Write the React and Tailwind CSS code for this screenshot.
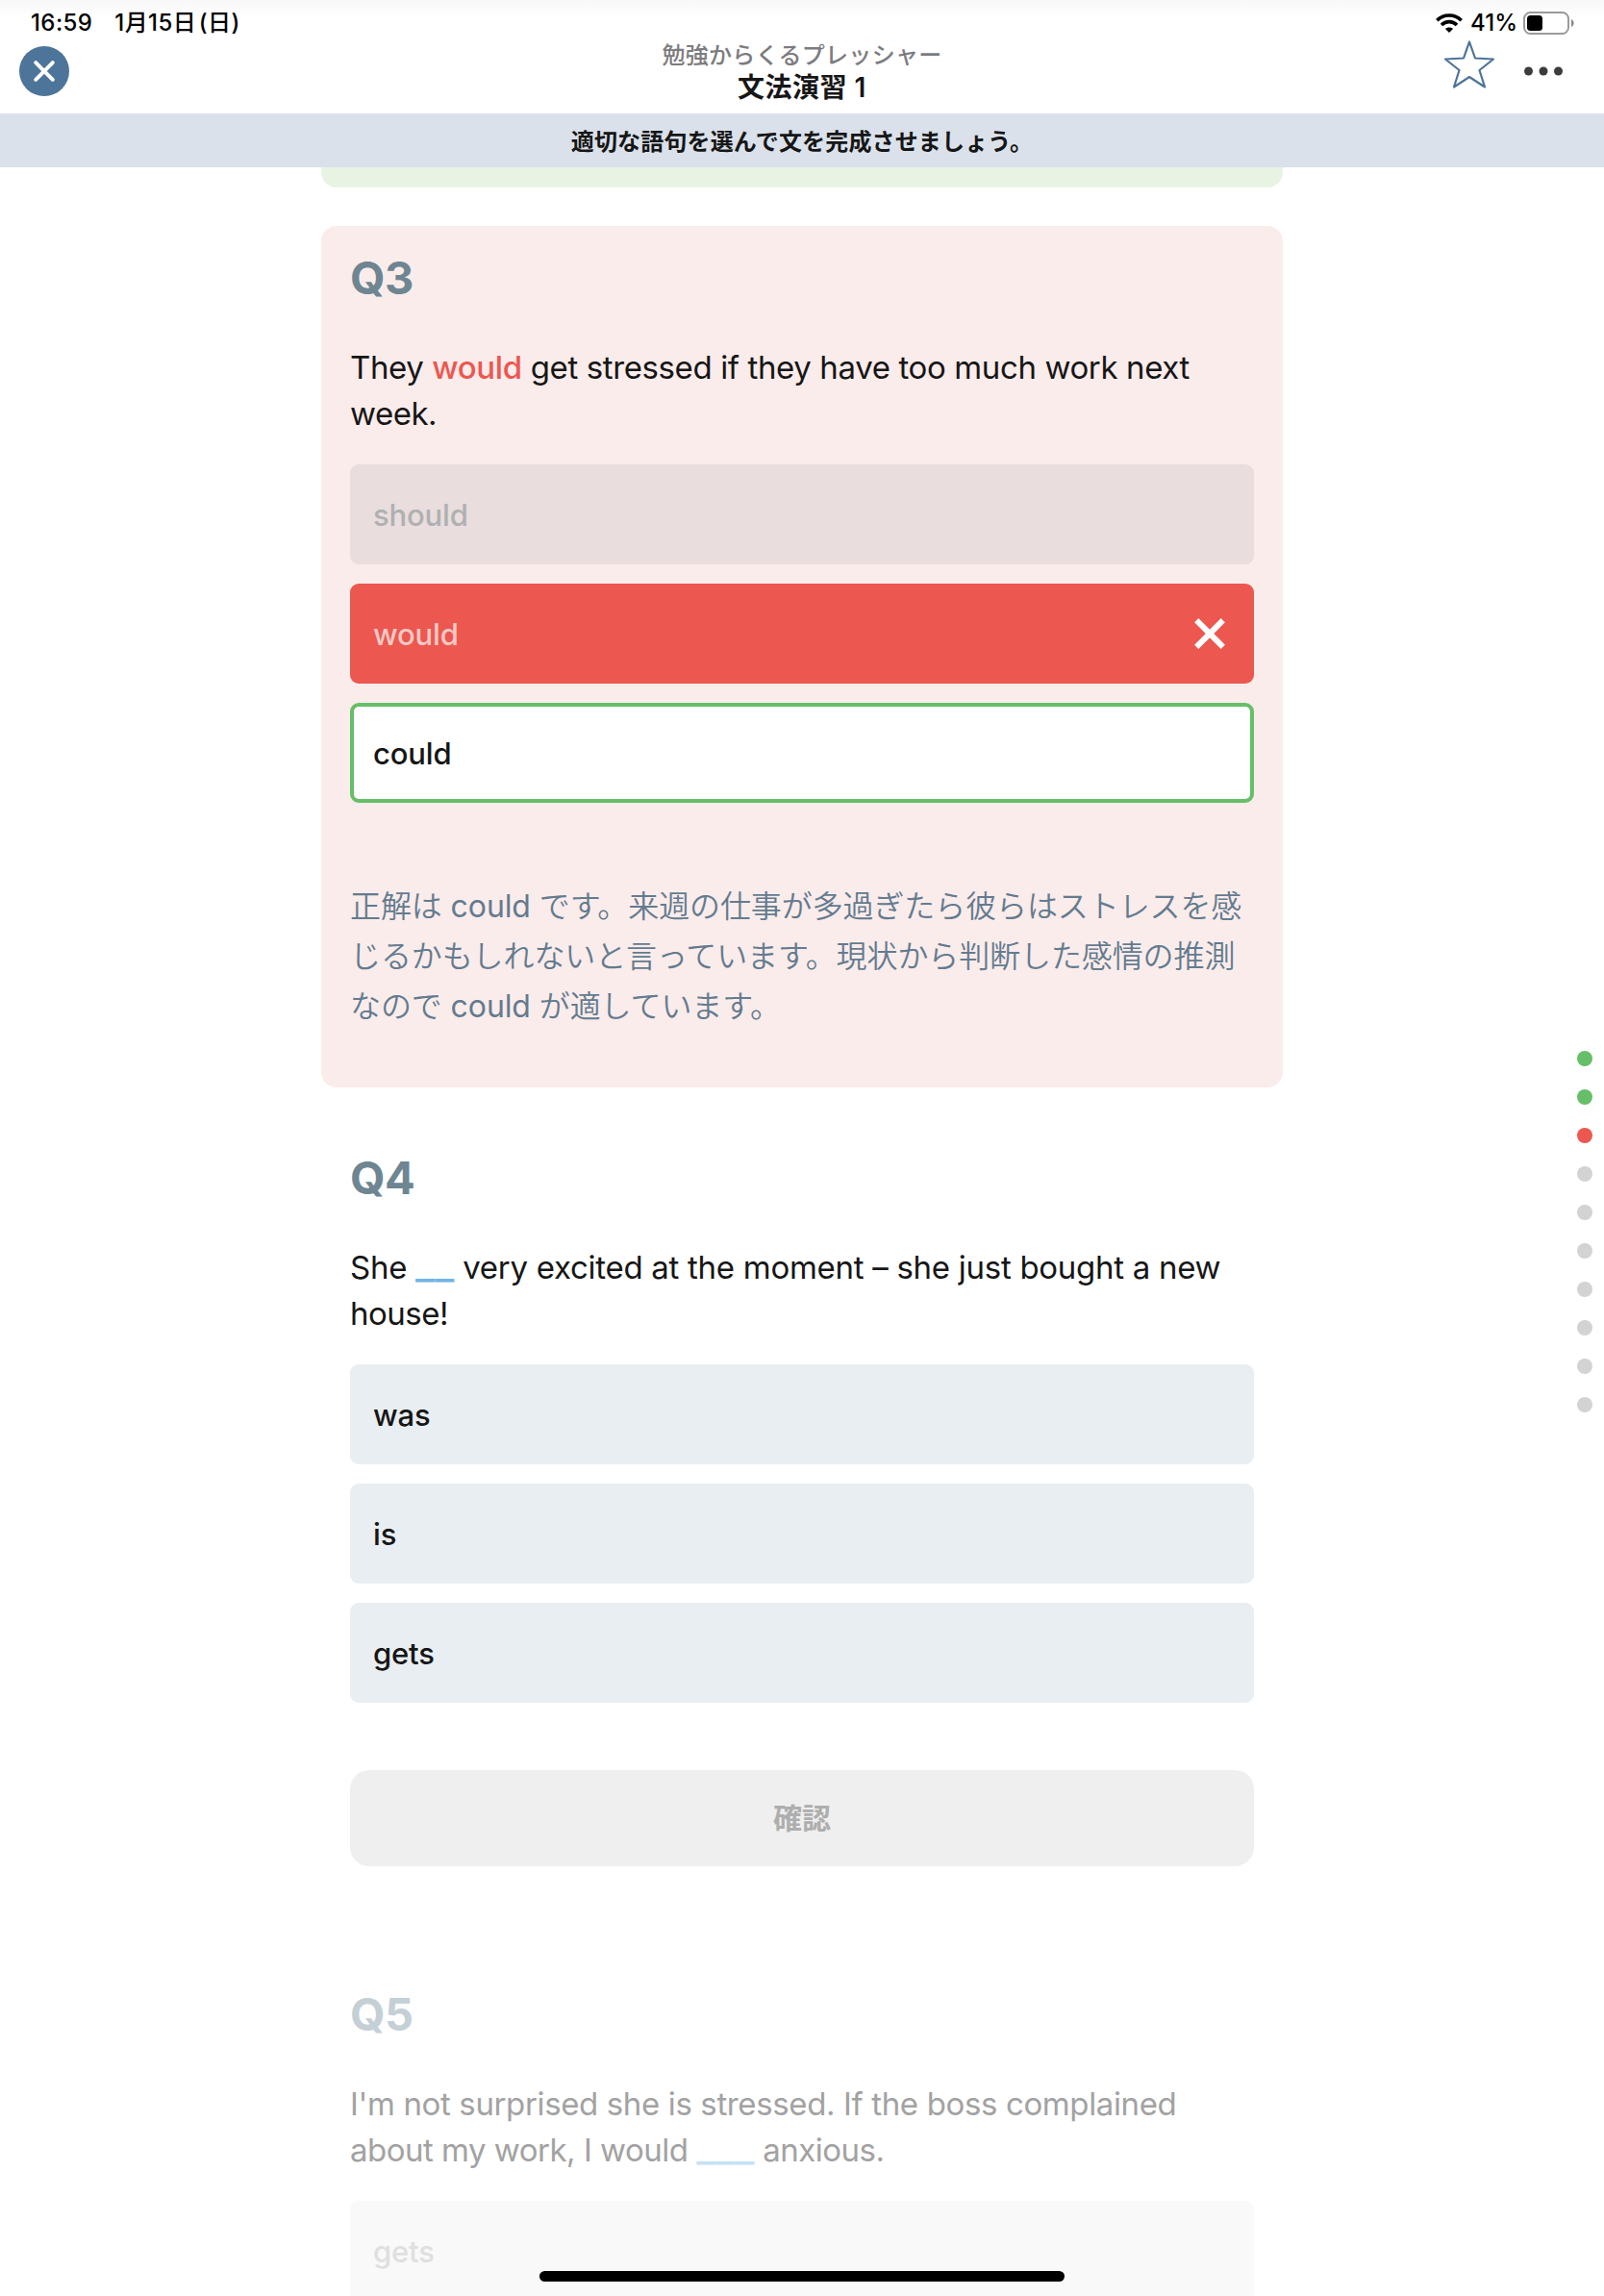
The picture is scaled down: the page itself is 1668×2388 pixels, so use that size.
function Line({ className = "", children }) {
  return <span className={`block whitespace-nowrap ${className}`}>{children}</span>;
}

function Blank({ className, children }) {
  return <span className={`text-[44px] leading-[0] tracking-normal ${className}`}>{children}</span>;
}

function Cross({ size, inset, width, cap }) {
  return (
    <svg width={size} height={size} viewBox={`0 0 ${size} ${size}`} fill="none" stroke="#fff" strokeWidth={width} strokeLinecap={cap}>
      <path d={`M${inset} ${inset}L${size - inset} ${size - inset}M${size - inset} ${inset}L${inset} ${size - inset}`} />
    </svg>
  );
}

function StatusBar() {
  return (
    <div className="flex h-12 items-start justify-between bg-linear-to-b from-[#f8f8f8] to-white to-40% pt-2 pr-[30px] pl-8 text-[24px] leading-8 font-medium text-black">
      <div className="flex gap-[23px]">
        <span className="tracking-[0.4px]">16:59</span>
        <span className="tracking-[0.4px] [word-spacing:-4px]">1月15日 (日)</span>
      </div>
      <div className="flex items-center">
        <svg className="mr-2" width="28" height="20" viewBox="0 0 28 20" fill="none" stroke="#000" strokeWidth="3.6">
          <path d="M1.3 7.2C8 .2 20 .2 26.7 7.2" />
          <path d="M6 12C10.5 7.5 17.5 7.5 22 12" />
          <path d="M14 20l-4-4c2-2 6-2 8 0z" fill="#000" stroke="none" />
        </svg>
        <span>41%</span>
        <svg className="ml-[6px]" width="54" height="24" viewBox="0 0 54 24">
          <rect x="1" y="1" width="46" height="22" rx="6.5" fill="none" stroke="#9a9a9a" strokeWidth="2" />
          <rect x="4" y="4" width="16" height="16" rx="3.5" fill="#000" />
          <path d="M50 8c3.5 1.5 3.5 6.5 0 8z" fill="#8a8a8a" />
        </svg>
      </div>
    </div>
  );
}

function Header() {
  return (
    <header className="shrink-0">
      <StatusBar />
      <div className="-mt-2 flex h-[78px] items-start justify-between pr-[43px] pl-5">
        <button className="mt-2 flex size-[52px] items-center justify-center rounded-full bg-[#4d7499]">
          <Cross size={26} inset={4.2} width={4} cap="round" />
        </button>
        <div className="ml-[94px] flex flex-col items-center pt-[2px]">
          <span className="text-[24px] leading-8 font-medium tracking-[0.3px] text-[#7c7c80]">勉強からくるプレッシャー</span>
          <span className="text-[28px] leading-[34px] font-semibold tracking-[0.5px] text-[#161616]">文法演習 1</span>
        </div>
        <div className="flex">
          <svg className="mt-[2px] mr-[31px]" width="52" height="50" viewBox="0 0 52 50" fill="none" stroke="#4d7499" strokeWidth="2.2" strokeLinejoin="round">
            <path d="M26 1.5L32 18.5L51 19.5L36.5 31L42 48.5L26 38L10 48.5L15.5 31L1 19.5L20 18.5Z" />
          </svg>
          <svg className="mt-[29px]" width="40" height="10" viewBox="0 0 40 10" fill="#3c3c3c">
            <circle cx="4.5" cy="5" r="4.5" />
            <circle cx="20" cy="5" r="4.5" />
            <circle cx="35.5" cy="5" r="4.5" />
          </svg>
        </div>
      </div>
      <div className="flex h-14 items-center justify-center bg-[#dae1ea] pt-[3px] text-[24px] font-semibold tracking-[0.15px] text-[#161616]">
        適切な語句を選んで文を完成させましょう。
      </div>
    </header>
  );
}

const tones = {
  idle: "bg-[#e9eef2] pl-6 text-[#161616]",
  muted: "bg-[#e9dddd] pl-6 text-[#afb0b2]",
  wrong: "bg-[#ec5750] pl-6 text-[#f7c9c5]",
  right: "border-4 border-[#66bf68] bg-white pl-5 text-[#161616]",
  faded: "bg-[#f9f9f9] pl-6 text-[#dfdfdf]",
};

function Option({ tone = "idle", children }) {
  return (
    <li className={`flex h-[104px] shrink-0 items-center justify-between rounded-[9px] pr-[29px] text-[31px] font-medium tracking-[-0.15px] ${tones[tone]}`}>
      <span className="pt-[2px]">{children}</span>
      {tone === "wrong" && <Cross size={34} inset={3.2} width={6} cap="butt" />}
    </li>
  );
}

function Question({ title, titleColor = "text-[#6e8592]", textColor = "text-[#161616]", text, options }) {
  return (
    <>
      <h2 className={`text-[47px] leading-[56px] font-bold tracking-[-0.5px] ${titleColor}`}>{title}</h2>
      <p className={`mt-[41px] text-[33px] leading-[48px] ${textColor}`}>{text}</p>
      <ul className="mt-[29px] flex flex-col gap-5">{options}</ul>
    </>
  );
}

const progress = ["right", "right", "wrong", "open", "open", "open", "open", "open", "open", "open"];
const dotColors = { right: "bg-[#66bf68]", wrong: "bg-[#ec5750]", open: "bg-[#d3d3d3]" };

export default function App() {
  return (
    <div lang="ja" className="relative flex h-[2388px] w-[1668px] flex-col overflow-hidden bg-white font-['Inter','Noto_Sans_CJK_JP',sans-serif]">
      <Header />
      <main className="mx-auto flex w-[1000px] flex-col">
        <div className="h-[21px] shrink-0 rounded-b-[16px] bg-[#e8f3e3]" />
        <section className="mt-10 shrink-0 rounded-[16px] bg-[#faeceb] px-[30px] pt-[26px] pb-[58px]">
          <Question
            title="Q3"
            text={
              <>
                <Line className="tracking-[-0.38px]">
                  They <span className="font-medium text-[#ec5750]">would</span> get stressed if they have too much work next
                </Line>
                <Line className="tracking-[-0.5px]">week.</Line>
              </>
            }
            options={
              <>
                <Option tone="muted">should</Option>
                <Option tone="wrong">would</Option>
                <Option tone="right">could</Option>
              </>
            }
          />
          <p className="mt-[82px] text-[32px] leading-[52px] font-[350] tracking-[-0.1px] text-[#647b8f]">
            <Line>
              正解は <span className="font-normal">could</span> です。来週の仕事が多過ぎたら彼らはストレスを感
            </Line>
            <Line>じるかもしれないと言っています。現状から判断した感情の推測</Line>
            <Line>
              なので <span className="font-normal">could</span> が適しています。
            </Line>
          </p>
        </section>
        <section className="shrink-0 px-[30px] pt-[66px]">
          <Question
            title="Q4"
            text={
              <>
                <Line className="tracking-[-0.28px]">
                  She <Blank className="text-[#72b4e3]">__</Blank> very excited at the moment – she just bought a new
                </Line>
                <Line className="tracking-[-0.5px]">house!</Line>
              </>
            }
            options={
              <>
                <Option>was</Option>
                <Option>is</Option>
                <Option>gets</Option>
              </>
            }
          />
          <button className="mt-[70px] flex h-[100px] w-full items-center justify-center rounded-[20px] bg-[#efefef] text-[30px] font-bold text-[#aeaeae]">
            確認
          </button>
        </section>
        <section className="shrink-0 px-[30px] pt-[126px]">
          <Question
            title="Q5"
            titleColor="text-[#c5cfd6]"
            textColor="text-[#a2a2a2]"
            text={
              <>
                <Line className="tracking-[-0.37px]">I'm not surprised she is stressed. If the boss complained</Line>
                <Line className="tracking-[-0.5px]">
                  about my work, I would <Blank className="text-[#c6e1f5]">___</Blank> anxious.
                </Line>
              </>
            }
            options={<Option tone="faded">gets</Option>}
          />
        </section>
      </main>
      <div className="absolute top-[1093px] right-3 flex flex-col gap-6">
        {progress.map((state, i) => (
          <span key={i} className={`size-4 rounded-full ${dotColors[state]}`} />
        ))}
      </div>
      <div className="absolute bottom-[15px] left-[561px] h-[11px] w-[546px] rounded-full bg-black" />
    </div>
  );
}
